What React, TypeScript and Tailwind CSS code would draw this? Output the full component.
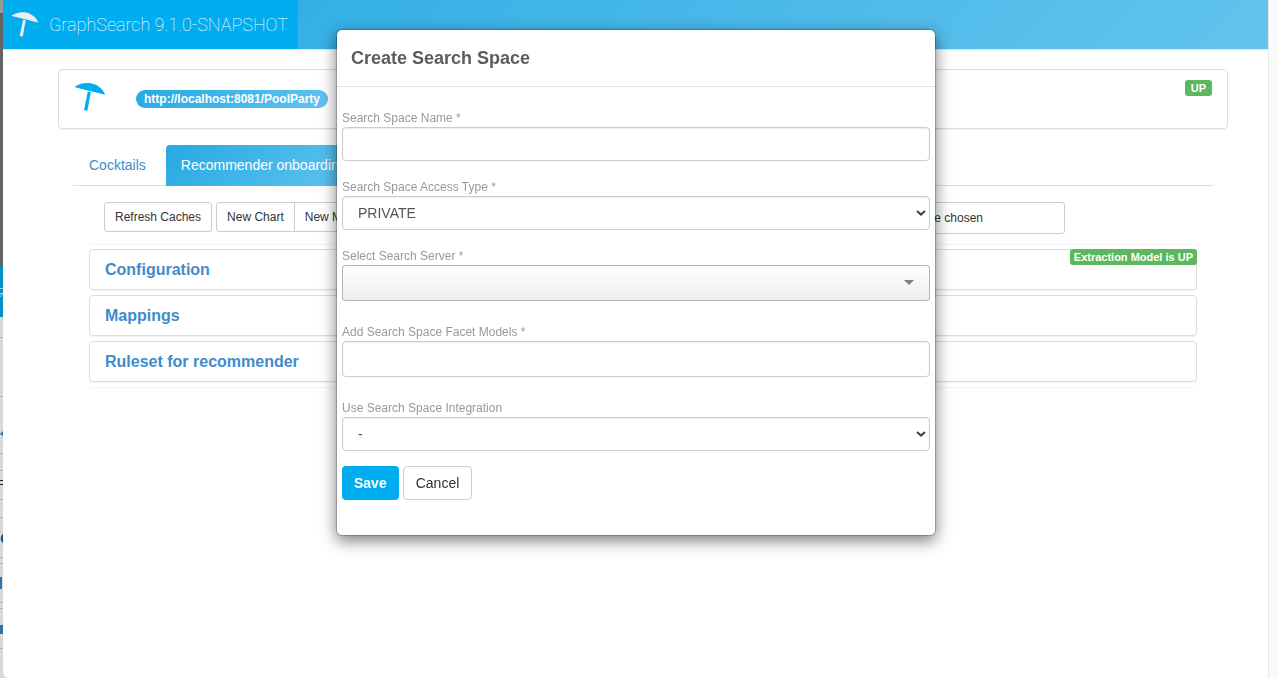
import React from "react";

const fieldClass =
  "block w-full rounded border border-[#ccc] bg-white text-sm text-[#555] shadow-[inset_0_1px_1px_rgba(0,0,0,0.075)]";

function Umbrella({ className }: { className?: string }) {
  return (
    <svg viewBox="0 0 32 30" className={className} fill="currentColor" aria-hidden="true">
      <path d="M0.5 5C5 1.6 11 0.2 17 1.2C24 2.6 29 7 31.2 12.8C26 11.4 21.5 10.3 15.8 9C10 7.6 5.5 6.4 0.5 5Z" />
      <path d="M13.8 9.5L16.8 10L13.4 28.8L10 28.2Z" />
    </svg>
  );
}

function Chevron() {
  return (
    <svg viewBox="0 0 10 6" className="pointer-events-none absolute right-1 top-3.5 h-1.5 w-2.5" aria-hidden="true">
      <path d="M1 1L5 4.6L9 1" fill="none" stroke="#444" strokeWidth="2" />
    </svg>
  );
}

function FieldLabel({ htmlFor, children }: { htmlFor: string; children: React.ReactNode }) {
  return (
    <label htmlFor={htmlFor} className="block text-xs leading-[17px] text-[#999]">
      {children}
    </label>
  );
}

// Sliver of the page that stays visible behind the window
function BackdropEdge() {
  return (
    <svg className="w-[3px] shrink-0 self-stretch" aria-hidden="true">
      <rect width="3" height="13" fill="#999" />
      <rect y="13" width="3" height="253" fill="#636363" />
      <rect y="266" width="3" height="51" fill="#0090c8" />
      <rect y="317" width="3" height="400" fill="#d8d8d8" />
      <path d="M0 288.5H3M0 293.5H3L0 297" fill="none" stroke="#9fd4ec" />
      <path
        d="M0 337.5H3M0 396.5H3M0 453.5H3M0 470.5H3M0 499.5H3M0 517.5H3M0 557.5H3M0 563.5H3M0 602.5H3M0 608.5H3M0 648.5H3"
        stroke="#b0b0b0"
      />
      <path d="M0 480.5H3M0 484.5H3" stroke="#222" />
      <path d="M0 434L3 431V436Z" fill="#3071a9" />
      <path d="M3 534C0 535 0 542 3 543Z" fill="#1d4f80" />
      <rect y="577" width="2" height="12" fill="#3071a9" />
      <rect y="625" width="3" height="9" fill="#3071a9" />
    </svg>
  );
}

function CreateSearchSpaceDialog() {
  return (
    <div className="fixed inset-0 flex items-start justify-center pr-1.5 pt-[29px]">
      <div
        role="dialog"
        aria-labelledby="dialog-title"
        className="w-[600px] rounded-md border border-black/20 bg-white bg-clip-padding shadow-[0_5px_15px_rgba(0,0,0,0.5)]"
      >
        <div className="border-b border-[#e5e5e5] px-3.5 py-4">
          <h4 id="dialog-title" className="text-lg font-bold leading-6 text-[#5c5c5c]">
            Create Search Space
          </h4>
        </div>

        <form className="px-[5px] pb-[35px] pt-[23px]">
          <div className="mb-[18px]">
            <FieldLabel htmlFor="name">Search Space Name *</FieldLabel>
            <input id="name" type="text" className={`${fieldClass} h-[34px] px-3`} />
          </div>

          <div className="mb-[18px]">
            <FieldLabel htmlFor="access">Search Space Access Type *</FieldLabel>
            <div className="relative">
              <select id="access" className={`${fieldClass} h-[34px] appearance-none px-[15px]`}>
                <option>PRIVATE</option>
                <option>PUBLIC</option>
              </select>
              <Chevron />
            </div>
          </div>

          <div className="mb-[23px]">
            <FieldLabel htmlFor="server">Select Search Server *</FieldLabel>
            <div className="relative">
              <select
                id="server"
                className="block h-9 w-full appearance-none rounded-[3px] border border-[#b5b5b5] bg-linear-to-b from-[#fefefe] to-[#efefef] px-4 text-sm"
              >
                <option></option>
              </select>
              <svg viewBox="0 0 10 5" className="pointer-events-none absolute right-4 top-[15px] h-[5px] w-2.5" aria-hidden="true">
                <path d="M0 0H10L5 5Z" fill="#808080" />
              </svg>
            </div>
          </div>

          <div className="mb-[23px]">
            <FieldLabel htmlFor="facets">Add Search Space Facet Models *</FieldLabel>
            <input id="facets" type="text" className={`${fieldClass} h-9 px-3`} />
          </div>

          <div className="mb-[15px]">
            <FieldLabel htmlFor="integration">Use Search Space Integration</FieldLabel>
            <div className="relative">
              <select id="integration" className={`${fieldClass} h-[34px] appearance-none px-[15px]`}>
                <option>-</option>
              </select>
              <Chevron />
            </div>
          </div>

          <div className="flex gap-1">
            <button type="submit" className="h-[34px] rounded bg-[#00adef] px-3 text-sm font-bold text-white">
              Save
            </button>
            <button type="button" className="h-[34px] rounded border border-[#ccc] bg-white px-3 text-sm text-[#333]">
              Cancel
            </button>
          </div>
        </form>
      </div>
    </div>
  );
}

export default function App() {
  return (
    <div className="flex min-h-screen bg-[#d8d8d8] font-['Liberation_Sans',Arial,sans-serif] text-sm text-[#333]">
      <BackdropEdge />

      <div className="min-w-0 flex-1 rounded-bl-md bg-white">
        <header className="flex h-[50px] border-b border-[#e7e7e7] bg-linear-[135deg] from-[#27a9e3] to-[#62c4ee]">
          <div className="flex w-[295px] items-center bg-[#00adef] pl-2">
            <Umbrella className="mr-2.5 h-[27px] w-7 shrink-0 text-[#eee]" />
            <h1 className="whitespace-nowrap font-['Roboto',sans-serif] text-lg font-thin text-white">
              GraphSearch 9.1.0-SNAPSHOT
            </h1>
          </div>
        </header>

        <main className="pl-[55px] pr-10 pt-[19px]">
          <section className="flex h-[60px] items-start rounded border border-[#ddd] px-[15px] py-2.5 shadow-[0_1px_1px_rgba(0,0,0,0.05)]">
            <Umbrella className="mt-0.5 h-[30px] w-8 text-[#00adef]" />
            <span className="ml-[30px] mt-2.5 rounded-full bg-linear-[135deg] from-[#27a9e3] to-[#62c4ee] px-2 text-xs font-bold leading-[18px] text-white">
              http://localhost:8081/PoolParty
            </span>
            <span className="ml-auto rounded-[3px] bg-[#5cb85c] px-1.5 text-[11px] font-bold leading-4 text-white">UP</span>
          </section>

          <div className="px-[15px] pt-4">
            <nav className="flex gap-1 border-b border-[#ddd]">
              <a href="#cocktails" className="px-4 py-2.5 leading-5 text-[#428bca]">
                Cocktails
              </a>
              <a
                href="#recommender"
                className="-mb-px rounded-t bg-linear-[135deg] from-[#27a9e3] to-[#62c4ee] px-[15px] pb-[11px] pt-2.5 leading-5 text-white"
              >
                Recommender onboarding
              </a>
            </nav>

            <div className="px-4">
              <div className="flex items-start rounded-b border-b border-[#f3f3f3] px-[15px] pb-2.5 pt-4 text-xs">
                <button type="button" className="h-[30px] rounded-[3px] border border-[#ccc] px-2.5">
                  Refresh Caches
                </button>
                <div className="ml-1 flex">
                  <button type="button" className="h-[30px] rounded-l-[3px] border border-[#ccc] px-2.5">
                    New Chart
                  </button>
                  <button type="button" className="-ml-px h-[30px] rounded-r-[3px] border border-[#ccc] px-2.5">
                    New Mapping
                  </button>
                </div>
                <label className="ml-auto mr-[117px] flex h-8 w-[250px] items-center rounded-[3px] border border-[#ccc] pl-[91px]">
                  <input type="file" className="sr-only" />
                  No file chosen
                </label>
              </div>

              <div className="space-y-[5px] rounded-b border-b border-[#f3f3f3] pb-[5px] pt-1">
                {["Configuration", "Mappings", "Ruleset for recommender"].map((title) => (
                  <section
                    key={title}
                    className="flex items-start justify-between rounded border border-[#ddd] shadow-[0_1px_1px_rgba(0,0,0,0.05)]"
                  >
                    <h4 className="px-[15px] py-2.5 text-base font-bold leading-[19px] text-[#428bca]">
                      <a href="#panel">{title}</a>
                    </h4>
                    {title === "Configuration" && (
                      <span className="-mr-px -mt-px rounded-[3px] bg-[#5cb85c] px-1 text-[11px] font-bold leading-4 text-white">
                        Extraction Model is UP
                      </span>
                    )}
                  </section>
                ))}
              </div>
            </div>
          </div>
        </main>
      </div>

      <div className="w-2.5 shrink-0 border-l border-[#e7e7e7] bg-[#fafafa]" />

      <CreateSearchSpaceDialog />
    </div>
  );
}
